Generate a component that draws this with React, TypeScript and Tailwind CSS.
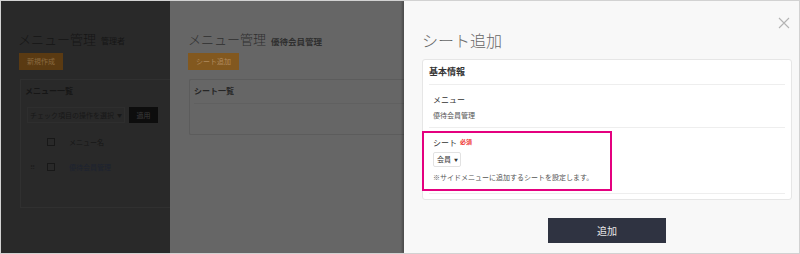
import React from 'react';

const font = { fontFamily: '"Noto Sans CJK JP", "Noto Sans", sans-serif' };

const Checkbox: React.FC<{ className?: string }> = ({ className = '' }) => (
  <span className={`inline-block w-[8px] h-[8px] border ${className}`} />
);

// Base page, behind two overlays
const BackPage = () => (
  <div className="w-[169px] shrink-0 bg-[#292929] pt-[30px] pl-[17px] overflow-hidden">
    <div className="h-[16px] flex items-end gap-[5px] whitespace-nowrap">
      <span className="text-[13px] leading-[16px] font-light text-[#151515]">メニュー管理</span>
      <span className="text-[8px] leading-[12px] text-[#151515]">管理者</span>
    </div>
    <div className="mt-[6px] ml-[1px] w-[44px] h-[17px] bg-[#5a3a12] text-[#8a6a40] text-[7px] flex items-center justify-center">
      新規作成
    </div>
    <div className="mt-[9px] ml-[2px] h-[129px] border border-r-0 border-[#303030] pl-[4px] pt-[6px]">
      <div className="text-[8px] font-bold leading-[10px] text-[#161616] whitespace-nowrap">メニュー一覧</div>
      <div className="mt-[11px] ml-[2px] flex gap-[4px]">
        <div className="w-[98px] h-[16px] border border-[#2e2e2e] flex items-center px-[2px] text-[7px] text-[#181818] whitespace-nowrap">
          チェック項目の操作を選択 <span className="ml-[3px] text-[5px]">▼</span>
        </div>
        <div className="w-[29px] h-[16px] bg-[#0d0d0d] text-[#3c3c3c] text-[7px] flex items-center justify-center">
          適用
        </div>
      </div>
      <div className="mt-[13px] flex items-center h-[12px]">
        <Checkbox className="ml-[22px] border-[#181818]" />
        <span className="ml-[14px] text-[7px] text-[#161616] whitespace-nowrap">メニュー名</span>
      </div>
      <div className="mt-[13px] flex items-center h-[12px]">
        <span className="ml-[5px] w-[10px] text-[7px] text-[#1c1c1c] leading-none">⠿</span>
        <Checkbox className="ml-[7px] border-[#181818]" />
        <span className="ml-[14px] text-[7px] text-[#1c2230] whitespace-nowrap">優待会員管理</span>
      </div>
    </div>
  </div>
);

// Middle drawer behind one overlay
const MiddlePage = () => (
  <div className="w-[234px] shrink-0 bg-[#666666] pt-[30px] pl-[18px] overflow-hidden">
    <div className="h-[16px] flex items-end gap-[5px] whitespace-nowrap">
      <span className="text-[13px] leading-[16px] font-light text-[#2f2f2f]">メニュー管理</span>
      <span className="text-[8.5px] leading-[12px] font-semibold text-[#2f2f2f]">優待会員管理</span>
    </div>
    <div className="mt-[6px] w-[51px] h-[17px] bg-[#82581f] text-[#b08a5e] text-[7px] flex items-center justify-center whitespace-nowrap">
      シート追加
    </div>
    <div className="mt-[9px] ml-[1px] h-[56px] border border-r-0 border-[#5c5c5c] rounded-l-[2px] pl-[4px] pt-[6px]">
      <div className="text-[8px] font-bold leading-[10px] text-[#262626] whitespace-nowrap">シート一覧</div>
      <div className="mt-[7px] border-t border-[#606060]" />
    </div>
  </div>
);

const Drawer = () => (
  <div className="relative flex-1 bg-[#f8f8f8] shadow-[-2px_0_2px_rgba(0,0,0,0.25)] pl-[18px] pr-[7px]">
    <svg className="absolute right-[9px] top-[16px]" width="12" height="12" viewBox="0 0 12 12">
      <path d="M1 1L11 11M11 1L1 11" stroke="#b4b4b4" strokeWidth="1.1" />
    </svg>
    <div className="pt-[29px] h-[58px] text-[16px] leading-[20px] font-light text-[#666] whitespace-nowrap">シート追加</div>
    <div className="bg-white border border-[#e6e6e6] rounded-[3px] px-[6px] pb-[5px]">
      <div className="h-[25px] border-b border-[#eeeeee] flex items-center text-[9px] font-bold text-[#333]">
        基本情報
      </div>
      <div className="h-[43px] border-b border-[#eeeeee] pl-[4px] pt-[10px]">
        <div className="text-[8px] leading-[10px] text-[#333]">メニュー</div>
        <div className="mt-[5px] text-[7px] leading-[10px] text-[#555]">優待会員管理</div>
      </div>
      <div className="h-[66px] border-b border-[#eeeeee] pl-[4px] pt-[10px]">
        <div className="flex items-start h-[10px]">
          <span className="text-[8px] leading-[10px] text-[#333]">シート</span>
          <span className="ml-[3px] text-[6px] leading-[7px] font-bold text-[#ee3333]">必須</span>
        </div>
        <div className="mt-[4px] w-[28px] h-[15px] border border-[#e2e2e2] rounded-[2px] bg-white flex items-center pl-[3px] text-[7px] text-[#333] whitespace-nowrap">
          会員<span className="ml-[3px] text-[4px]">▼</span>
        </div>
        <div className="mt-[5px] text-[7px] leading-[10px] text-[#555] whitespace-nowrap">
          ※サイドメニューに追加するシートを設定します。
        </div>
      </div>
    </div>
    <div className="flex justify-center mt-[18px]">
      <button className="w-[118px] h-[25px] bg-[#2f3341] text-[#e8e8e8] text-[10px]">追加</button>
    </div>
    {/* annotation highlight */}
    <div className="absolute left-[18px] top-[130px] w-[190px] h-[60px] border-2 border-[#e4007f]" />
  </div>
);

export default function App() {
  return (
    <div style={font} className="w-[800px] h-[254px] border border-[#d2d2d2] flex overflow-hidden">
      <BackPage />
      <MiddlePage />
      <Drawer />
    </div>
  );
}
